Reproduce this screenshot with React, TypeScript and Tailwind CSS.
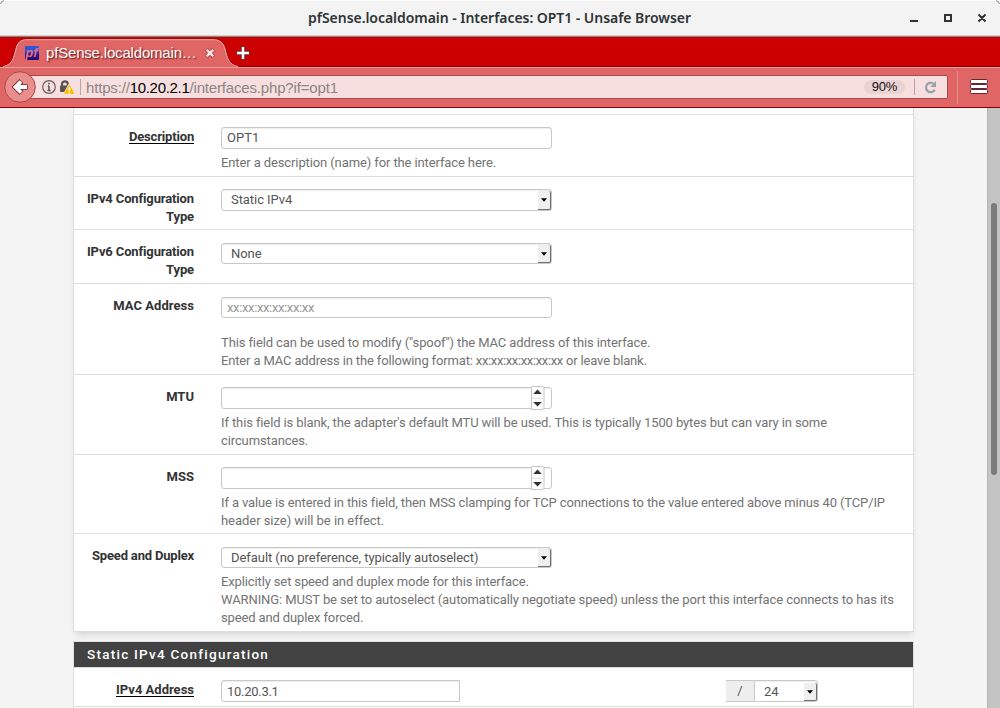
import type { ReactNode } from "react";

function TitleBar() {
  return (
    <div className="relative flex h-[37px] items-center justify-center border-b border-[#85857f] bg-[#f3f3f3] pr-px shadow-[inset_0_1px_0_#fafafa,inset_0_-1px_0_#d0d0cc]">
      <svg className="absolute left-0 top-0" width="1000" height="6" viewBox="0 0 1000 6" fill="none">
        <path d="M0 0h4L0 4z" fill="#fff" />
        <path d="M1000 0h-4l4 4z" fill="#fff" />
        <path d="M0.5 4Q1 1 4 0.5M999.5 4Q999 1 996 0.5" stroke="#8a8a8a" />
      </svg>
      <h1 className="whitespace-nowrap font-['Noto_Sans','Open_Sans',sans-serif] text-[14px] font-semibold leading-5 tracking-[-0.045px] text-[#2e3436]">
        pfSense.localdomain - Interfaces: OPT1 - Unsafe Browser
      </h1>
      <svg className="absolute left-[900px] top-[8px]" width="96" height="20" viewBox="0 0 96 20" fill="none" stroke="#2e3436" strokeWidth="2">
        <path d="M10 13h8M45 7h6v6h-6zM78.500 6.500l7 7M85.500 6.500l-7 7" />
      </svg>
    </div>
  );
}

function TabStrip() {
  return (
    <div className="relative h-[30px] border-b border-[#8c0000] bg-[#cc0000]">
      <svg className="absolute left-0 top-0" width="260" height="30" viewBox="0 0 260 30" fill="none">
        <path d="M2 30C12 29 13 21 15 13C17 5 20 2.500 27 2.500H213C220 2.500 224 5 226 13C228 21 229 29 240 30z" fill="#e06666" />
        <path d="M0 29.500C11 29 12.500 21 14.500 13C16.500 4.500 19 1.500 27 1.500H213C221 1.500 224.500 4.500 226.500 13C228.500 21 230 29 241 29.500" stroke="#8f1010" strokeOpacity=".75" />
        <path d="M3 29.500C12.500 28 14 20 15.800 13C17.500 6 20 2.700 27 2.700H213C220 2.700 223.500 6 225.200 13C227 20 228.500 28 238 29.500" stroke="#eda0a0" />
      </svg>
      <div className="relative flex h-full items-center pl-[25px] pt-[2px]">
        <svg width="14" height="14" viewBox="0 0 14 14" className="shrink-0">
          <defs>
            <linearGradient id="fav" x1="0" y1="0" x2="0" y2="1">
              <stop offset="0" stopColor="#2d5bd6" />
              <stop offset=".35" stopColor="#2f52c8" />
              <stop offset=".6" stopColor="#30158a" />
              <stop offset="1" stopColor="#26086c" />
            </linearGradient>
          </defs>
          <rect width="14" height="14" rx="1" fill="url(#fav)" />
          <text x="0.500" y="10.500" fontFamily="Liberation Sans, sans-serif" fontStyle="italic" fontWeight="700" fontSize="12.500" fill="#e0708c">pf</text>
        </svg>
        <span className="ml-[7px] w-[152px] whitespace-nowrap font-['Liberation_Sans',sans-serif] text-[15px] leading-5 tracking-[-0.18px] text-white [text-shadow:1px_1px_1.5px_#501010]">
          pfSense.localdomain…
        </span>
        <svg className="ml-[7px]" width="10" height="10" viewBox="0 0 10 10" fill="none">
          <path d="M1.500 1.500l7 7M8.500 1.500l-7 7" stroke="#b84040" strokeWidth="4" />
          <path d="M1.800 1.800l6.400 6.400M8.200 1.800l-6.400 6.400" stroke="#fbe8e8" strokeWidth="2.400" />
        </svg>
        <svg className="ml-[20px]" width="16" height="16" viewBox="0 0 16 16" fill="none">
          <path d="M8 1v14M1 8h14" stroke="#7a2a2a" strokeWidth="4.400" />
          <path d="M8 2v12M2 8h12" stroke="#fff" strokeWidth="2.400" />
        </svg>
      </div>
    </div>
  );
}

function Toolbar() {
  return (
    <div className="relative h-[41px] border-b border-[#8c0000] border-t border-t-[#ee9b9b] bg-[#e06666]">
      <div className="ml-5 mt-[7px] flex h-6 w-[928px] items-center rounded-[2px] border border-[#a94a4a] bg-[#f8dfdf] pl-[21px] font-['Liberation_Sans',sans-serif]">
        <svg width="34" height="18" viewBox="0 0 34 18" fill="none" className="shrink-0">
          <circle cx="7" cy="9" r="6.300" stroke="#6b5b5b" strokeWidth="1.200" />
          <path d="M7 8v4.200M5.800 8h1.200M5.500 12.400h3M7 4.800v1.800" stroke="#5f5050" strokeWidth="1.500" />
          <path d="M20 9V6.200a2.900 2.900 0 0 1 5.800 0V9" stroke="#5c5252" strokeWidth="2.200" />
          <rect x="18" y="7.500" width="9" height="6.500" rx="1" fill="#5c5252" />
          <path d="M27.300 7L32 15.700H22.600z" fill="#ffbf00" stroke="#f8e6e0" strokeWidth="2.400" strokeLinejoin="round" paintOrder="stroke" />
          <path d="M27.300 7.200L31.800 15.500H22.800z" fill="#ffbf00" stroke="#ffbf00" strokeLinejoin="round" />
          <path d="M27.300 9.200v3.500M27.300 13.700v1.500" stroke="#fff" strokeWidth="1.500" />
        </svg>
        <span className="ml-[4px] h-4 w-px bg-[#b9a5a5]" />
        <span className="ml-[5px] mt-px whitespace-nowrap text-[15px] leading-5 tracking-[-0.17px] text-[#8d8484]">
          https://<span className="tracking-[-0.3px] text-black">10.20.2.1</span>/interfaces.php?if=opt1
        </span>
        <span className="ml-auto flex h-[14px] w-[41px] items-center justify-center rounded-full bg-[#ebd3d3] text-[13px] leading-[14px] tracking-[-0.2px] text-[#111]">90%</span>
        <span className="ml-[9px] h-4 w-px bg-[#b9a5a5]" />
        <svg className="ml-[9px] mr-[9px]" width="14" height="14" viewBox="0 0 14 14" fill="none">
          <path d="M10.800 9.800A4.700 4.700 0 1 1 9.400 3.600" stroke="#93a1ad" strokeWidth="2.200" />
          <path d="M12 1v6H6.200z" fill="#93a1ad" />
        </svg>
      </div>
      <svg className="absolute left-[4px] top-[3px]" width="33" height="33" viewBox="0 0 33 33" fill="none">
        <circle cx="16" cy="16" r="15.300" fill="#e98d8d" stroke="#a84848" />
        <path d="M17.500 10L11.500 16L17.500 22M12 16H23.800" stroke="#7a2c2c" strokeWidth="5.600" />
        <path d="M17 10.500L11.500 16L17 21.500M12 16H23" stroke="#fff" strokeWidth="3.800" />
      </svg>
      <span className="absolute left-[957px] top-[3px] h-[33px] w-px bg-[#ea8f8f]" />
      <svg className="absolute left-[969px] top-[10px]" width="20" height="17" viewBox="0 0 20 17" fill="#fff" stroke="#6a2430">
        <rect x="1.500" y="1.500" width="17" height="4" rx="1.200" />
        <rect x="1.500" y="6.500" width="17" height="4" rx="1.200" />
        <rect x="1.500" y="11.500" width="17" height="4" rx="1.200" />
      </svg>
    </div>
  );
}

type RowProps = { label: string; underline?: boolean; className: string; labelClass?: string; children: ReactNode };

function Row({ label, underline, className, labelClass = "", children }: RowProps) {
  return (
    <div className={`flex border-b border-[#dedede] ${className}`}>
      <div className={`w-[120px] shrink-0 text-right font-bold text-[#333] ${labelClass}`}>
        <span className={underline ? "inline-block h-4 border-b border-black leading-[18px]" : ""}>{label}</span>
      </div>
      <div className="ml-[27px] w-[680px]">{children}</div>
    </div>
  );
}

const field = "flex items-center border border-[#c8c8c8] bg-white pl-[5px] text-[#555] shadow-[inset_0_1px_1px_#eeeeee]";

function Select({ value, className }: { value: string; className: string }) {
  return (
    <div className={`flex rounded-[3px] border border-[#c8c8c8] bg-white pl-[9px] text-[#555] shadow-[inset_0_1px_1px_#eeeeee] ${className}`}>
      <span className="flex-1 whitespace-nowrap pt-px leading-[18px] tracking-[-0.06px]">{value}</span>
      <span className="mt-px flex w-[13px] items-center justify-center rounded-r-[2px] border-b border-r border-[#707070] bg-[#efefef]">
        <svg width="6" height="4" viewBox="0 0 6 4">
          <path d="M0 0.300h6L3 3.800z" />
        </svg>
      </span>
    </div>
  );
}

function NumberField() {
  return (
    <div className="relative h-[22px] w-[331px] rounded-[3px] border border-[#c8c8c8] shadow-[inset_0_1px_1px_#eeeeee]">
      <svg className="absolute left-[309px] top-[-2px]" width="14" height="25" viewBox="0 0 14 25">
        <path d="M.5.500h10.500a2 2 0 0 1 2 2v19a2 2 0 0 1-2 2H.5z" fill="#fff" stroke="#c6c6c6" />
        <path d="M1 12.500h12" stroke="#e2e2e2" />
        <path d="M2.200 8L6.500 3.600L10.800 8zM2.200 16L6.500 20.400L10.800 16z" fill="#2e3436" />
      </svg>
    </div>
  );
}

const help = "whitespace-nowrap leading-[18px] tracking-[-0.11px] text-[#737373]";

export default function App() {
  return (
    <div className="flex h-[708px] w-[1000px] flex-col overflow-hidden bg-[#f4f4f4]">
      <TitleBar />
      <TabStrip />
      <Toolbar />
      <div className="flex min-h-0 flex-1 font-['Roboto',sans-serif] text-[13px] leading-[18px]">
        <main className="min-w-0 flex-1 overflow-hidden pl-[73px]">
          <section className="h-[524px] w-[841px] border-x border-[#dedede] bg-white shadow-[0_5px_7px_-3px_#d0d0d0]">
            <div className="h-[7px] border-b border-[#dedede]" />
            <Row label="Description" underline className="h-[62px] pt-[12px]" labelClass="pt-px tracking-[-0.17px]">
              <div className={`${field} h-[22px] w-[331px] rounded-[3px]`}>OPT1</div>
              <p className={`${help} mt-[5px]`}>Enter a description (name) for the interface here.</p>
            </Row>
            <Row label="IPv4 Configuration Type" className="h-[53px] pt-[12px]" labelClass="pt-px tracking-[-0.13px]">
              <Select value="Static IPv4" className="h-[22px] w-[331px]" />
            </Row>
            <Row label="IPv6 Configuration Type" className="h-[54px] pt-[13px]" labelClass="tracking-[-0.13px]">
              <Select value="None" className="h-[21px] w-[331px]" />
            </Row>
            <Row label="MAC Address" className="h-[91px] pt-[13px]" labelClass="tracking-[0.05px]">
              <div className={`${field} h-[21px] w-[331px] rounded-[3px]`}>
                <span className="tracking-[-0.36px] text-[#999]">xx:xx:xx:xx:xx:xx</span>
              </div>
              <p className={`${help} mt-[16px]`}>
                This field can be used to modify ("spoof") the MAC address of this interface.
                <br />
                <span className="tracking-[-0.15px]">Enter a MAC address in the following format: </span>
                <span className="tracking-[-0.36px]">xx:xx:xx:xx:xx:xx</span>
                <span className="tracking-[-0.15px]"> or leave blank.</span>
              </p>
            </Row>
            <Row label="MTU" className="h-[80px] pt-[12px]" labelClass="pt-px">
              <NumberField />
              <p className={`${help} mt-[5px]`}>
                If this field is blank, the adapter's default MTU will be used. This is typically 1500 bytes but can vary in some
                <br />
                circumstances.
              </p>
            </Row>
            <Row label="MSS" className="h-[79px] pt-[12px]" labelClass="pt-px">
              <NumberField />
              <p className={`${help} mt-[5px]`}>
                <span className="tracking-[-0.12px]">If a value is entered in this field, then MSS clamping for TCP connections to the value entered above minus 40 (TCP/IP</span>
                <br />
                <span className="tracking-[-0.04px]">header size) will be in effect.</span>
              </p>
            </Row>
            <Row label="Speed and Duplex" className="h-[98px] pt-[13px]" labelClass="tracking-[-0.18px]">
              <Select value="Default (no preference, typically autoselect)" className="h-[21px] w-[331px]" />
              <p className={`${help} mt-[5px]`}>
                <span className="tracking-[-0.13px]">Explicitly set speed and duplex mode for this interface.</span>
                <br />
                <span className="tracking-[-0.1px]">WARNING: MUST be set to autoselect (automatically negotiate speed) unless the port this interface connects to has its</span>
                <br />
                <span className="tracking-[-0.13px]">speed and duplex forced.</span>
              </p>
            </Row>
          </section>
          <section className="mt-[9px] w-[841px] border-x border-t border-[#dedede] bg-white">
            <h2 className="h-[26px] border-b border-[#dedede] bg-[#424242] bg-clip-padding pl-[13px] text-[13.5px] font-medium leading-[25px] tracking-[1.25px] text-white">
              Static IPv4 Configuration
            </h2>
            <Row label="IPv4 Address" underline className="h-[39px] pt-[12px]" labelClass="pt-px">
              <div className="flex">
                <div className={`${field} h-[22px] w-[239px] rounded-l-[3px] pt-px tracking-[-0.28px]`}>10.20.3.1</div>
                <div className="ml-[266px] flex h-[22px] w-[28px] items-center justify-center border-y border-[#c8c8c8] bg-[#eee] text-[#555]">/</div>
                <Select value="24" className="h-[22px] w-[64px] rounded-l-none pt-px" />
              </div>
            </Row>
            <div className="h-4" />
          </section>
        </main>
        <aside className="w-[13px] shrink-0 border-l border-[#b5b5b5] bg-[#c3c4c3] pl-[3px] pt-[95px]">
          <div className="h-[272px] w-[6px] rounded-full bg-[#7a7d7c]" />
        </aside>
      </div>
    </div>
  );
}
